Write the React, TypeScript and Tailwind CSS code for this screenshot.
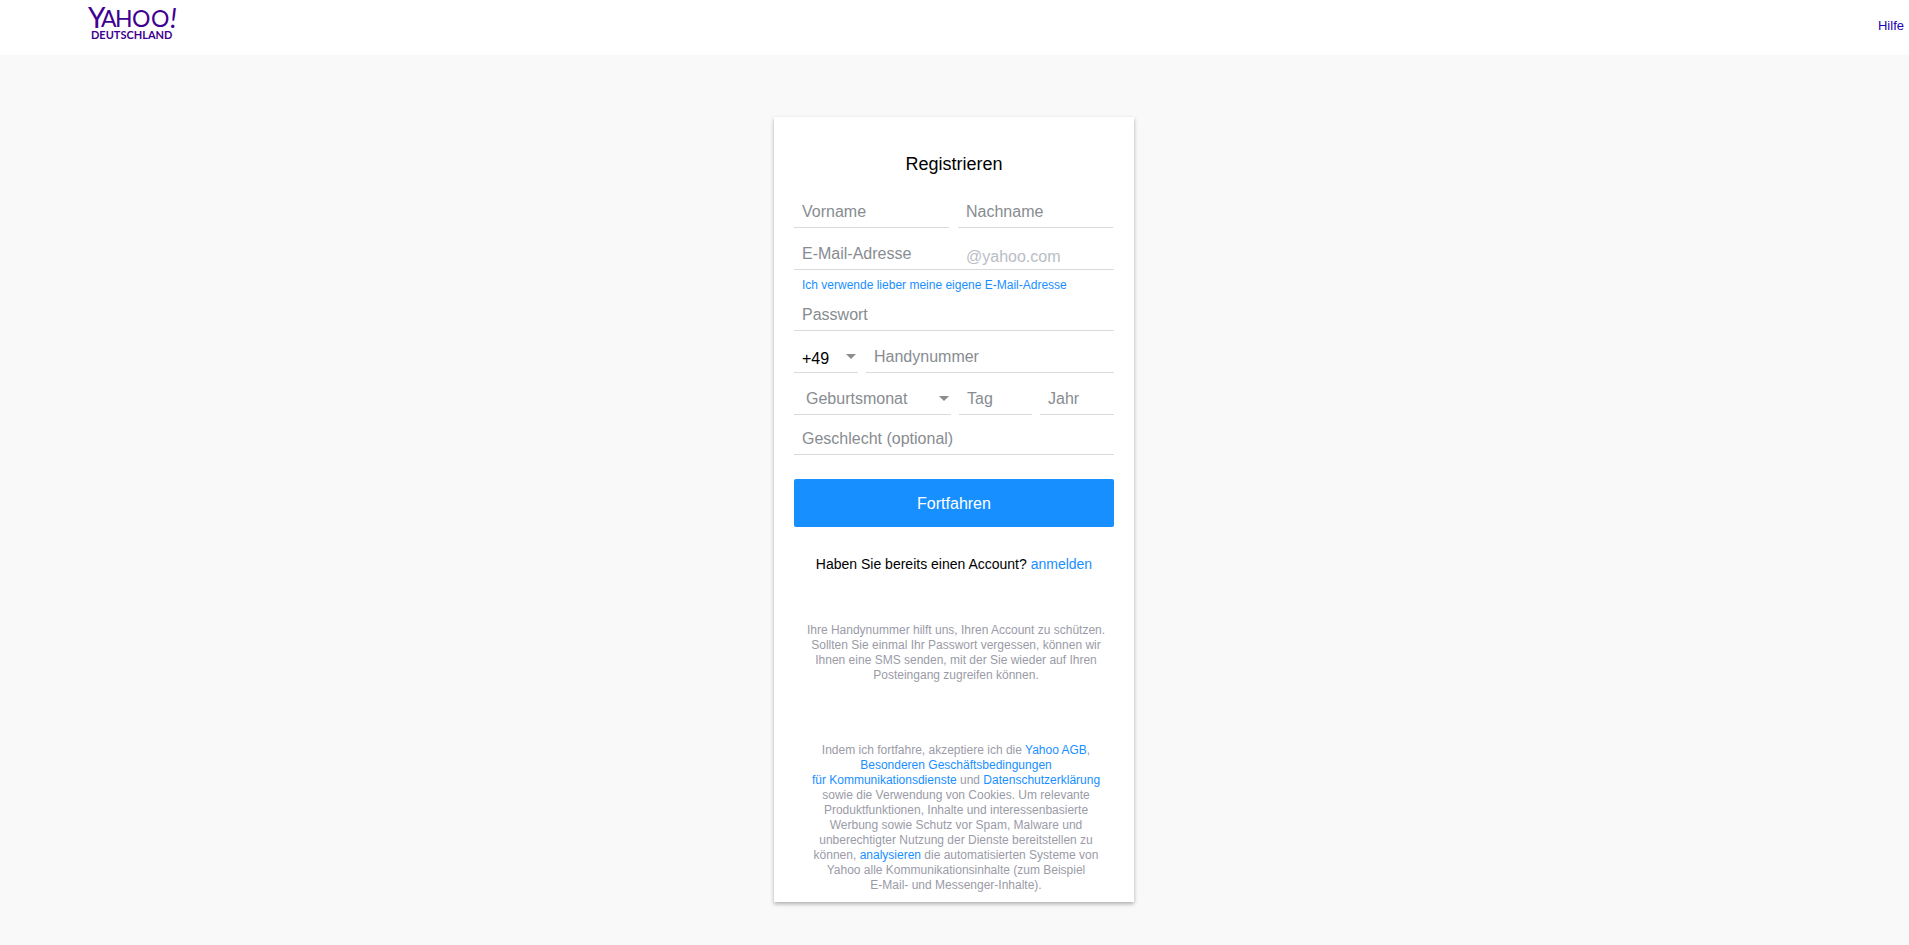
import type { InputHTMLAttributes, ReactNode, SelectHTMLAttributes } from 'react';
import { clsx } from 'clsx';

const MONTHS = [
  'Januar',
  'Februar',
  'März',
  'April',
  'Mai',
  'Juni',
  'Juli',
  'August',
  'September',
  'Oktober',
  'November',
  'Dezember',
];

const FIELD =
  'block h-8 w-full min-w-0 rounded-none border-b border-[#d8dade] bg-transparent text-base outline-none focus:border-[#188fff]';

export default function App() {
  return (
    <div className="min-h-screen bg-[#f9f9f9] pb-10 font-['Liberation_Sans',Arial,sans-serif] text-black">
      <header className="flex h-[55px] items-start justify-between bg-white pr-[5px] pl-[88px]">
        <a href="#" aria-label="Yahoo Deutschland">
          <Logo />
        </a>
        <a href="#hilfe" className="pt-4 text-[13px] leading-5 text-[#1d00b2]">
          Hilfe
        </a>
      </header>

      <div className="flex justify-center pt-[62px] pr-px">
        <main className="w-[360px] bg-white px-5 pt-[35px] pb-[9px] shadow-[0_2px_4px_rgba(0,0,0,0.3)]">
          <h1 className="text-center text-lg leading-6">Registrieren</h1>
          <SignupForm />

          <p className="mt-[27px] text-center text-sm leading-5">
            Haben Sie bereits einen Account? <Link href="#anmelden">anmelden</Link>
          </p>

          <div className="ml-1 text-center text-xs leading-[15px] text-[#9a9ba7]">
            <p className="mt-[49px]">
              Ihre Handynummer hilft uns, Ihren Account zu schützen.
              <br />
              Sollten Sie einmal Ihr Passwort vergessen, können wir
              <br />
              Ihnen eine SMS senden, mit der Sie wieder auf Ihren
              <br />
              Posteingang zugreifen können.
            </p>
            <p className="mt-[60px]">
              Indem ich fortfahre, akzeptiere ich die <Link href="#agb">Yahoo AGB</Link>,
              <br />
              <Link href="#bedingungen">
                Besonderen Geschäftsbedingungen
                <br />
                für Kommunikationsdienste
              </Link>{' '}
              und <Link href="#datenschutz">Datenschutzerklärung</Link>
              <br />
              sowie die Verwendung von Cookies. Um relevante
              <br />
              Produktfunktionen, Inhalte und interessenbasierte
              <br />
              Werbung sowie Schutz vor Spam, Malware und
              <br />
              unberechtigter Nutzung der Dienste bereitstellen zu
              <br />
              können, <Link href="#analysieren">analysieren</Link> die automatisierten Systeme von
              <br />
              Yahoo alle Kommunikationsinhalte (zum Beispiel
              <br />
              E-Mail- und Messenger-Inhalte).
            </p>
          </div>
        </main>
      </div>
    </div>
  );
}

function SignupForm() {
  return (
    <form className="mt-5" onSubmit={(e) => e.preventDefault()}>
      <div className="grid grid-cols-[155px_155px] gap-[9px]">
        <Field label="Vorname" name="firstName" />
        <Field label="Nachname" name="lastName" />
      </div>

      <div className="mt-2.5 flex h-8 border-b border-[#d8dade]">
        <input
          aria-label="E-Mail-Adresse"
          placeholder="E-Mail-Adresse"
          name="email"
          className="w-[164px] pl-2 text-base outline-none placeholder:text-[#878c91]"
        />
        <span className="pt-[7px] pl-2 text-base leading-6 text-[#b9bdc5]">@yahoo.com</span>
      </div>
      <p className="pt-2 pb-1.5 pl-2 text-xs leading-[15px]">
        <Link href="#eigene">Ich verwende lieber meine eigene E-Mail-Adresse</Link>
      </p>

      <Field label="Passwort" name="password" type="password" />

      <div className="mt-2.5 grid grid-cols-[64px_1fr] gap-2">
        <SelectField label="Ländervorwahl" name="countryCode" className="pt-1 pl-2">
          <option>+49</option>
          <option>+43</option>
          <option>+41</option>
        </SelectField>
        <Field label="Handynummer" name="phone" type="tel" />
      </div>

      <div className="mt-2.5 grid grid-cols-[157px_73px_1fr] gap-2">
        <SelectField label="Geburtsmonat" name="month" className="pl-3 text-[#878c91]">
          <option>Geburtsmonat</option>
          {MONTHS.map((month) => (
            <option key={month}>{month}</option>
          ))}
        </SelectField>
        <Field label="Tag" name="day" />
        <Field label="Jahr" name="year" />
      </div>

      <div className="mt-2">
        <Field label="Geschlecht (optional)" name="gender" />
      </div>

      <button
        type="submit"
        className="mt-6 h-12 w-full rounded-xs bg-[#188fff] pt-0.5 text-base text-white"
      >
        Fortfahren
      </button>
    </form>
  );
}

function Field({ label, ...props }: { label: string } & InputHTMLAttributes<HTMLInputElement>) {
  return (
    <input
      aria-label={label}
      placeholder={label}
      className={clsx(FIELD, 'pl-2 placeholder:text-[#878c91]')}
      {...props}
    />
  );
}

function SelectField({
  label,
  className,
  children,
  ...props
}: { label: string; children: ReactNode } & SelectHTMLAttributes<HTMLSelectElement>) {
  return (
    <div className="relative">
      <select aria-label={label} className={clsx(FIELD, 'appearance-none', className)} {...props}>
        {children}
      </select>
      <svg
        viewBox="0 0 10 5"
        className="pointer-events-none absolute top-[13px] right-0.5 h-[5px] w-2.5 fill-[#8c8c8c]"
        aria-hidden="true"
      >
        <path d="M0 0h10L5 5z" />
      </svg>
    </div>
  );
}

function Link({ href, children }: { href: string; children: ReactNode }) {
  return (
    <a href={href} className="text-[#188fff]">
      {children}
    </a>
  );
}

/** Wordmark: large Y and slanted exclamation mark around smaller capitals. */
function Logo() {
  return (
    <svg
      width="96"
      height="48"
      className="overflow-visible fill-[#400090] font-[Lato,sans-serif]"
      aria-hidden="true"
    >
      <text fontSize="23">
        <tspan x="0" y="28" fontSize="28">
          Y
        </tspan>
        <tspan x="13" y="27">
          A
        </tspan>
        <tspan x="27" y="27">
          H
        </tspan>
        <tspan x="44" y="27">
          O
        </tspan>
        <tspan x="63" y="27">
          O
        </tspan>
        <tspan x="82" y="28" fontSize="27" fontStyle="italic">
          !
        </tspan>
      </text>
      <text x="3" y="39" fontSize="11" fontWeight="700">
        DEUTSCHLAND
      </text>
    </svg>
  );
}
